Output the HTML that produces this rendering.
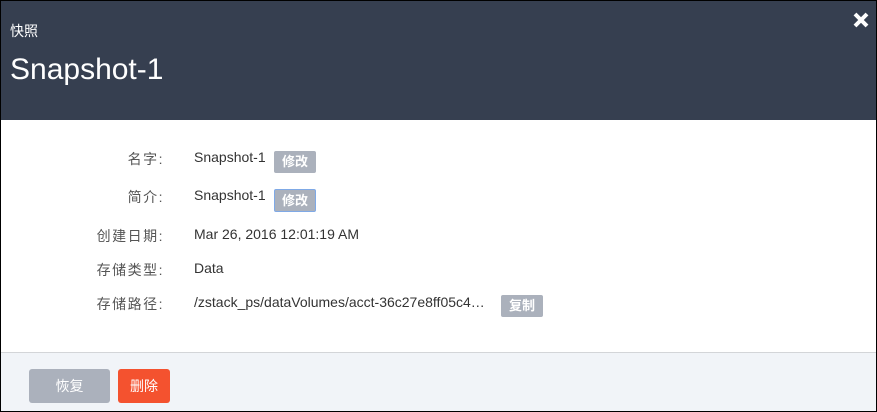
<!DOCTYPE html>
<html><head><meta charset="utf-8"><style>
*{margin:0;padding:0;box-sizing:border-box}
body{width:877px;height:412px;overflow:hidden;background:#fff;font-family:"Liberation Sans","Noto Sans CJK SC",sans-serif;}
.frame{position:absolute;left:0;top:0;width:877px;height:412px;border:1px solid #000;}
.hdr{position:absolute;left:1px;top:1px;width:875px;height:119px;background:#363f50;color:#fff}
.sub{position:absolute;left:9px;top:20px;font-size:14px}
.title{position:absolute;left:9px;top:52px;font-size:30px}
.x{position:absolute;left:851px;top:10px;width:18px;height:18px}
.lab{position:absolute;right:713px;font-size:14px;color:#555;letter-spacing:1.5px}
.val{position:absolute;left:194px;font-size:14px;color:#333}
.btn{position:absolute;background:#abb1bc;color:#fff;font-size:13px;font-weight:bold;border-radius:2px;text-align:center}
.ftr{position:absolute;left:1px;top:352px;width:875px;height:59px;background:#f1f4f8;border-top:1px solid #d3d5d8}
.fb{position:absolute;top:16px;height:34px;line-height:34px;font-size:14px;color:#fff;text-align:center;border-radius:3px}
</style></head><body>
<div class="hdr">
<div class="sub">快照</div>
<div class="title">Snapshot-1</div>
<svg class="x" viewBox="0 0 18 18"><path d="M3 3L15 15M15 3L3 15" stroke="#fff" stroke-width="4"/></svg>
</div>
<div class="lab" style="top:149px">名字:</div><div class="val" style="top:149px">Snapshot-1</div>
<div class="btn" style="left:274px;top:151px;width:42px;height:22px;line-height:22px">修改</div>
<div class="lab" style="top:187px">简介:</div><div class="val" style="top:187px">Snapshot-1</div>
<div class="btn" style="left:274px;top:189px;width:42px;height:23px;line-height:21px;border:1px solid #7fa9e6">修改</div>
<div class="lab" style="top:226px">创建日期:</div><div class="val" style="top:226px">Mar 26, 2016 12:01:19 AM</div>
<div class="lab" style="top:260px">存储类型:</div><div class="val" style="top:260px">Data</div>
<div class="lab" style="top:294px">存储路径:</div><div class="val" style="top:294px">/zstack_ps/dataVolumes/acct-36c27e8ff05c4…</div>
<div class="btn" style="left:501px;top:295px;width:42px;height:22px;line-height:22px">复制</div>
<div class="ftr">
<div class="fb" style="left:28px;width:81px;background:#abb1bc">恢复</div>
<div class="fb" style="left:117px;width:52px;background:#f4522f">删除</div>
</div>
<div class="frame"></div>
</body></html>
